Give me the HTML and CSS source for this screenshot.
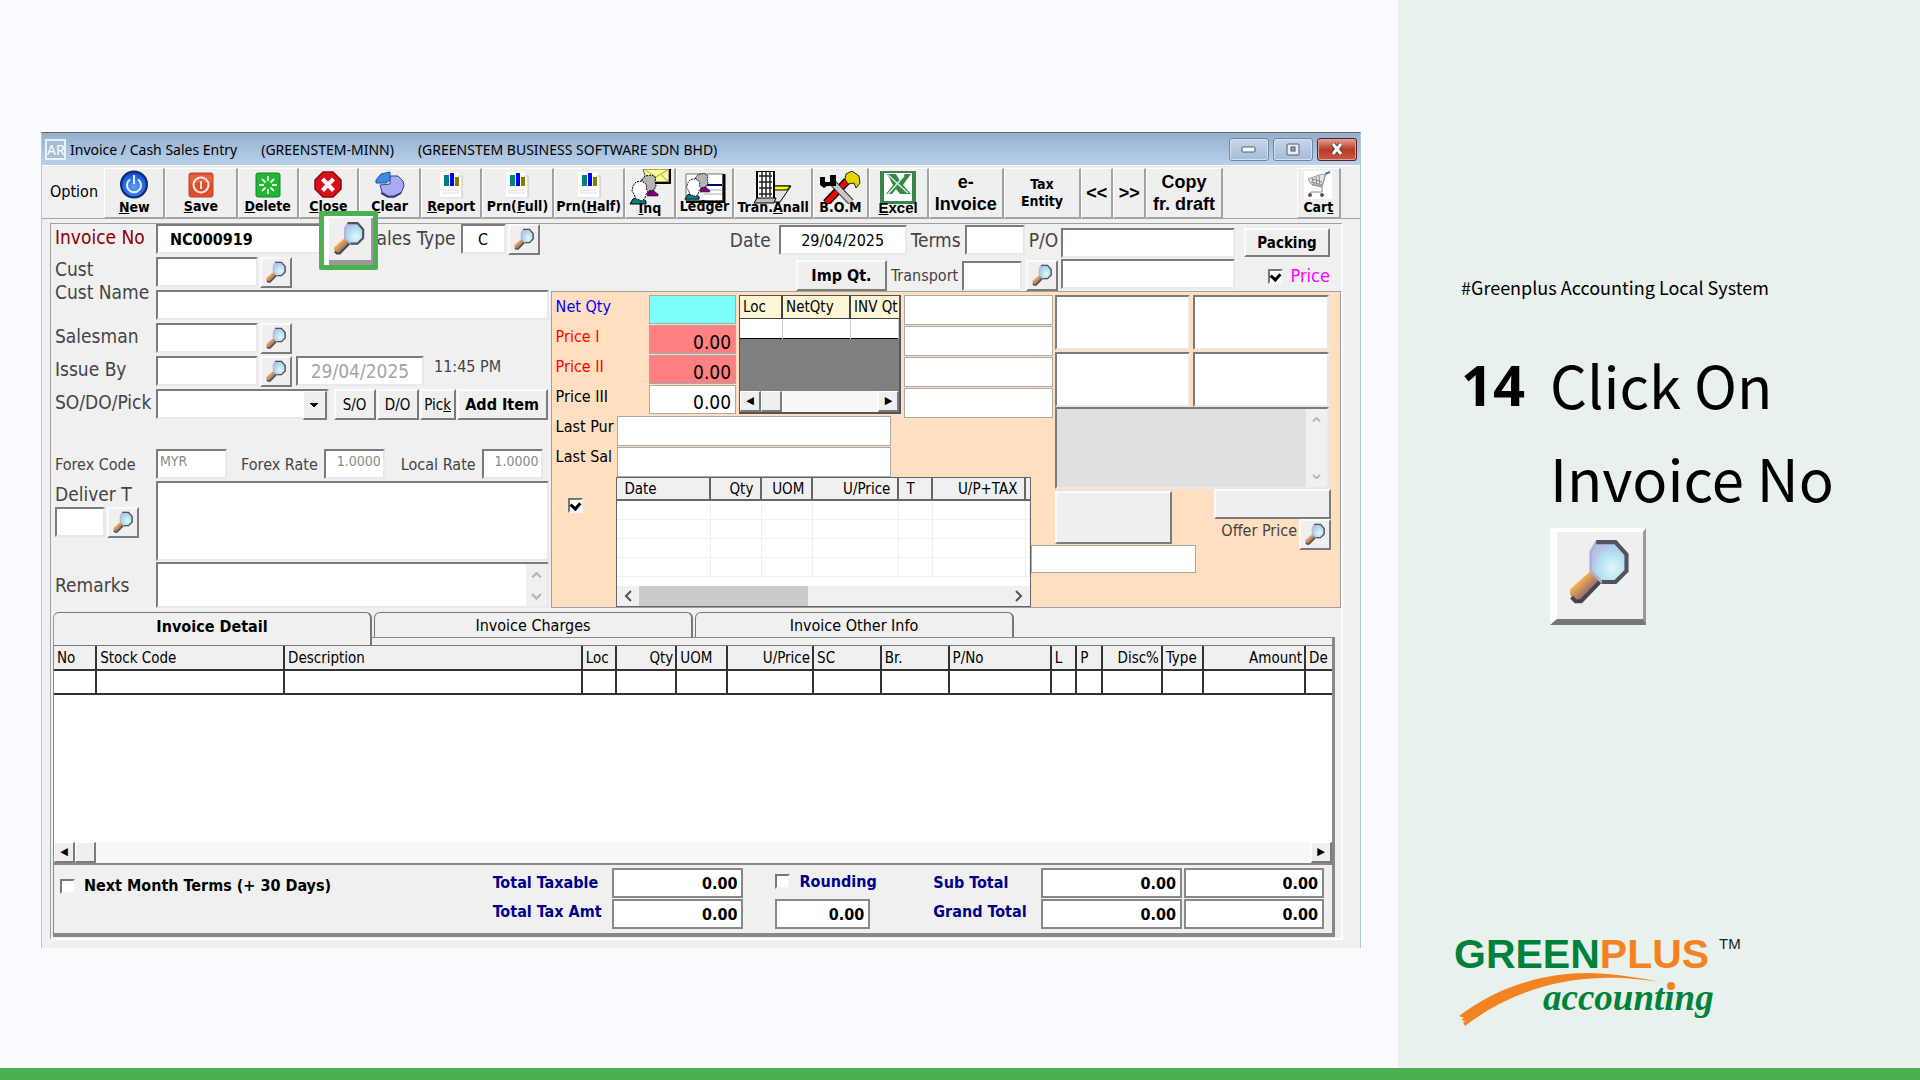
FILE: index.html
```html
<!DOCTYPE html>
<html lang="en">
<head>
    <meta charset="UTF-8">
    <meta name="viewport" content="width=device-width, initial-scale=1.0">
    <title>Greenplus Accounting - Invoice / Cash Sales Entry</title>
    <link rel="stylesheet" href="styles.css">
</head>
<body>
    <!-- Shared icons -->
    <svg class="icon-defs" width="0" height="0" aria-hidden="true">
        <defs>
            <linearGradient id="handle" x1="0" y1="0" x2="1" y2="1">
                <stop offset="0.3" stop-color="#ffb545"/>
                <stop offset="0.6" stop-color="#a77a70"/>
                <stop offset="0.8" stop-color="#3c3c44"/>
            </linearGradient>
            <radialGradient id="glass" cx="0.6" cy="0.65" r="0.6">
                <stop offset="0" stop-color="#e2f8f8"/>
                <stop offset="0.6" stop-color="#b4e2f2"/>
                <stop offset="1" stop-color="#b5c2e6"/>
            </radialGradient>
            <radialGradient id="blueBall" cx="0.5" cy="0.6" r="0.6">
                <stop offset="0" stop-color="#5fa0ff"/>
                <stop offset="0.7" stop-color="#2563e0"/>
                <stop offset="1" stop-color="#0b3a9c"/>
            </radialGradient>
        </defs>
        <symbol id="find" viewBox="0 0 24 24">
            <path d="M9 12 12.500 15.500 6 22.500 3 22.500 1.500 20.500 1.500 18.500z" fill="url(#handle)"/>
            <path d="M2 21.500 3.500 23 5.500 23 12.500 15.800" fill="none" stroke="#44444c" stroke-width="1.400"/>
            <path d="M11 1.500h7l4 4.500v6l-4 4h-5l-4-4V5z" fill="url(#glass)" stroke="#a9b4dc" stroke-width="1"/>
            <path d="M11 1.500h7l4 4.500v6l-4 4h-5" fill="none" stroke="#50525e" stroke-width="1.500"/>
        </symbol>
        <symbol id="chart" viewBox="0 0 24 26">
            <path d="M1 0h18l4 4v22H1z" fill="#fff"/>
            <path d="M19 4h4v22H1" fill="none" stroke="#c4c4c4"/>
            <path d="M5 3h5v11H5z" fill="#008080"/>
            <path d="M11 1h4v13h-4z" fill="#00f"/>
            <path d="M16 5h4v9h-4z" fill="#808000"/>
            <path d="M3 18h17M3 21h17" stroke="#dedede"/>
        </symbol>
        <symbol id="people" viewBox="0 0 36 32">
            <path d="M19 19l5-2 2 3 3 2v2H18z" fill="#800080" stroke="#000" stroke-width=".5"/>
            <path d="M13 8l3-4 7-1 4 3-1 3 1 5-2 4-5 1-2 3-5-3z" fill="#b4b4b4" stroke="#000" stroke-dasharray="2 1"/>
            <path d="M1 32l3-5 5-2 8 4v3z" fill="#008080" stroke="#000"/>
            <path d="M4 14l3-4 6-1 5 4-1 3 2 4-2 2-1 4-3 3-2-1-4-1-2-5-2-3z" fill="#fff" stroke="#000" stroke-dasharray="2 1"/>
        </symbol>
    </svg>

    <div class="page">
        <main class="stage">
            <section class="window">
                <header class="titlebar">
                    <span class="app-icon">AR</span>
                    <h1 class="title"><span>Invoice / Cash Sales Entry</span><span>(GREENSTEM-MINN)</span><span>(GREENSTEM BUSINESS SOFTWARE SDN BHD)</span></h1>
                    <div class="window-buttons">
                        <button type="button" aria-label="Minimize"><svg width="16" height="10" viewBox="0 0 16 10"><rect x="1" y="3" width="13" height="5" rx="1" fill="#fff" stroke="#525a68"/></svg></button>
                        <button type="button" aria-label="Maximize"><svg width="14" height="13" viewBox="0 0 14 13"><rect x="1" y="1" width="12" height="11" rx="1" fill="#e8edf5" stroke="#525a68"/><rect x="5" y="4" width="4" height="4" fill="#8fa7c5" stroke="#525a68"/></svg></button>
                        <button type="button" class="close" aria-label="Close window"><svg width="16" height="14" viewBox="0 0 16 14"><path d="M4 2l8 10M12 2L4 12" stroke="#50383c" stroke-width="5"/><path d="M4 2l8 10M12 2L4 12" stroke="#fff" stroke-width="3"/></svg></button>
                    </div>
                </header>

                <nav class="toolbar">
                    <span class="option">Option</span>
                    <button type="button">
                        <svg width="30" height="29" viewBox="0 0 30 29"><circle cx="15" cy="14.500" r="13" fill="url(#blueBall)" stroke="#092a6e" stroke-width="2"/><path d="M11 9.500a7 7 0 1 0 8 0M15 5v9" fill="none" stroke="#e4efff" stroke-width="2"/></svg>
                        <span><u>N</u>ew</span>
                    </button>
                    <button type="button">
                        <svg width="26" height="26" viewBox="0 0 26 26"><rect x="1" y="1" width="24" height="24" rx="2" fill="#de4d2b" stroke="#b34a31"/><path d="M2 3h22v8H2z" fill="#ef7351" opacity=".5"/><circle cx="13" cy="13" r="7.500" fill="none" stroke="#ffe9e0" stroke-width="2"/><path d="M13 9v8" stroke="#ffe9e0" stroke-width="2"/></svg>
                        <span><u>S</u>ave</span>
                    </button>
                    <button type="button">
                        <svg width="26" height="26" viewBox="0 0 26 26"><rect x="1" y="1" width="24" height="24" rx="2" fill="#22b533" stroke="#0d8a1c"/><path d="M13 4v5M13 17v5M4 13h5M17 13h5M7 7l3.500 3.500M15.500 15.500 19 19M19 7l-3.500 3.500M10.500 15.500 7 19" stroke="#e2ffe2" stroke-width="1.800"/></svg>
                        <span><u>D</u>elete</span>
                    </button>
                    <button type="button">
                        <svg width="28" height="27" viewBox="0 0 28 27"><path d="M9 1h10l8 8v9l-8 8H9l-8-8V9z" fill="#d8101d" stroke="#8b0a12" stroke-width="1.500"/><path d="M8.500 8l11 11.500M19.500 8l-11 11.500" stroke="#fff" stroke-width="4"/></svg>
                        <span><u>C</u>lose</span>
                    </button>
                    <button type="button">
                        <svg width="30" height="27" viewBox="0 0 30 27"><path d="M15 13V5h8l5 5 1 5-3 7-7 3h-6l-6-4-2-7z" fill="#a9aaf2" stroke="#3d3f80"/><path d="M1 9l5-6 9-2v8l-4 3H1z" fill="#3e8ae6" stroke="#1c4f9c"/><path d="M6 22l7 4h6l7-4" fill="none" stroke="#2b2b5e" stroke-width="1.500"/></svg>
                        <span><u>C</u>lear</span>
                    </button>
                    <button type="button"><svg width="24" height="26"><use href="#chart"/></svg><span><u>R</u>eport</span></button>
                    <button type="button"><svg width="24" height="26"><use href="#chart"/></svg><span>Prn(<u>F</u>ull)</span></button>
                    <button type="button"><svg width="24" height="26"><use href="#chart"/></svg><span>Prn(<u>H</u>alf)</span></button>
                    <button type="button" class="tall-icon">
                        <svg width="42" height="36" viewBox="0 0 42 36"><path d="M14 0h26v13H18z" fill="#ff8" stroke="#555"/><path d="M15 0l12 8L40 0M20 12l6-5M39 12l-7-6" fill="none" stroke="#999"/><path d="M41 0v14H24" fill="none" stroke="#000" stroke-width="2"/><use href="#people" width="36" height="34" y="2"/></svg>
                        <span><u>I</u>nq</span>
                    </button>
                    <button type="button" class="tall-icon">
                        <svg width="42" height="32" viewBox="0 0 42 32"><path d="M2 3h37v27H2z" fill="#fff" stroke="#777"/><path d="M40 3v28H2" fill="none" stroke="#000" stroke-width="3"/><path d="M18 14h20" stroke="#000080" stroke-width="2"/><path d="M18 19h20M20 23h18" stroke="#aaa"/><use href="#people" width="32" height="30" y="-1"/></svg>
                        <span>Ledger</span>
                    </button>
                    <button type="button" class="tall-icon">
                        <svg width="42" height="33" viewBox="0 0 42 33"><path d="M19 15h20L28 31H18z" fill="#e6e6e6" stroke="#000"/><path d="M20 15h18l-3 4H20z" fill="#ff0" stroke="#000"/><path d="M5 0h17v28H5z" fill="#fff" stroke="#000" stroke-width="2"/><path d="M10 0v26M14 0v26M18 0v26M7 5h13M7 11h13M7 17h13M7 23h13" stroke="#222" stroke-width="1.500"/><path d="M5 27h19l-2 5H2z" fill="#bbb" stroke="#000"/></svg>
                        <span>Tran.<u>A</u>nall</span>
                    </button>
                    <button type="button" class="tall-icon">
                        <svg width="42" height="33" viewBox="0 0 42 33"><path d="M28 10 7 32" stroke="#000" stroke-width="8"/><path d="M28 10 7 32" stroke="#f00" stroke-width="5"/><path d="M12 10 32 31" stroke="#333" stroke-width="7"/><path d="M12 10 32 31" stroke="#c8c8c8" stroke-width="5"/><path d="M1 6h5v5h5V4h6v11H8l-3 2-4-3z" fill="#000"/><path d="M27 3l6-3 7 5 1 7-4 5-2-5-6 1-3-5z" fill="#e5d600" stroke="#222"/></svg>
                        <span>B.O.M</span>
                    </button>
                    <button type="button" class="tall-icon excel">
                        <svg width="36" height="33" viewBox="0 0 36 33"><path d="M2 0h32v32H2z" fill="#fff" stroke="#398549" stroke-width="4"/><path d="M7 3h9l4 7 5-7h6l-8 11 8 9H20l-4-5-4 5H6l7-9z" fill="#35874a"/><path d="M8 4l20 18M24 5 8 23" stroke="#d8eedc" stroke-width="1.500"/></svg>
                        <span><u>E</u>xcel</span>
                    </button>
                    <button type="button" class="big">e-<br>Invoice</button>
                    <button type="button">Tax<br>Entity</button>
                    <button type="button" class="big">&lt;&lt;</button>
                    <button type="button" class="big">&gt;&gt;</button>
                    <button type="button" class="big">Copy<br>fr. draft</button>
                    <span></span>
                    <button type="button">
                        <svg width="28" height="28" viewBox="0 0 28 28"><path d="M0 0h28v28H0z" fill="#fff"/><path d="M26 1l-4 1-4 14-10-2M4 8l14-5 3 1-3 12-11-3z" fill="#e5e5e5" stroke="#999"/><path d="M26 1l-5 2" stroke="#4a78c8" stroke-width="2"/><path d="M8 8l10 3M7 11l11 3M8 7l2 7M12 6l1 9M15 5l1 10M18 16v5H7l-2 2" fill="none" stroke="#888"/><circle cx="6" cy="24" r="2" fill="#555"/><circle cx="18" cy="24" r="2" fill="#555"/></svg>
                        <span>Car<u>t</u></span>
                    </button>
                </nav>

                <form class="entry">
                    <div class="entry-top">
                        <!-- Customer side -->
                        <div class="customer">
                            <div class="row">
                                <label class="name maroon" for="invoice-no">Invoice No</label>
                                <input class="invoice-no" id="invoice-no" type="text" value="NC000919">
                                <label class="sales-label" for="sales-type">Sales Type</label>
                                <input class="sales-type" id="sales-type" type="text" value="C">
                                <button type="button" class="find" aria-label="Find sales type"><svg><use href="#find"/></svg></button>
                                <button type="button" class="find highlight" aria-label="Find invoice no"><svg><use href="#find"/></svg></button>
                            </div>
                            <div class="row double">
                                <div class="name-stack">
                                    <label for="cust">Cust</label>
                                    <label for="cust-name">Cust Name</label>
                                </div>
                                <div class="field-stack">
                                    <div class="inline">
                                        <input class="code" id="cust" type="text">
                                        <button type="button" class="find" aria-label="Find customer"><svg><use href="#find"/></svg></button>
                                    </div>
                                    <input id="cust-name" type="text">
                                </div>
                            </div>
                            <div class="row">
                                <label class="name" for="salesman">Salesman</label>
                                <input class="code" id="salesman" type="text">
                                <button type="button" class="find" aria-label="Find salesman"><svg><use href="#find"/></svg></button>
                            </div>
                            <div class="row">
                                <label class="name" for="issue-by">Issue By</label>
                                <input class="code" id="issue-by" type="text">
                                <button type="button" class="find" aria-label="Find issuer"><svg><use href="#find"/></svg></button>
                                <input class="issue-date" type="text" value="29/04/2025" aria-label="Issue date" disabled>
                                <span class="time">11:45 PM</span>
                            </div>
                            <div class="row gap-after">
                                <label class="name" for="pick">SO/DO/Pick</label>
                                <div class="combo"><select id="pick"><option></option></select></div>
                                <div class="pick-buttons">
                                    <button type="button">S/O</button>
                                    <button type="button">D/O</button>
                                    <button type="button">Pic<u>k</u></button>
                                    <button type="button" class="strong">Add Item</button>
                                </div>
                            </div>
                            <div class="row forex">
                                <label class="name" for="forex-code">Forex Code</label>
                                <input class="forex-code" id="forex-code" type="text" value="MYR" disabled>
                                <label for="forex-rate">Forex Rate</label>
                                <input class="rate" id="forex-rate" type="text" value="1.0000" disabled>
                                <label for="local-rate">Local Rate</label>
                                <input class="rate" id="local-rate" type="text" value="1.0000" disabled>
                            </div>
                            <div class="row deliver">
                                <div class="deliver-name">
                                    <label for="deliver-code">Deliver T</label>
                                    <div class="inline">
                                        <input id="deliver-code" type="text">
                                        <button type="button" class="find" aria-label="Find address"><svg><use href="#find"/></svg></button>
                                    </div>
                                </div>
                                <textarea aria-label="Delivery address"></textarea>
                            </div>
                            <div class="row remarks">
                                <label class="name" for="remarks">Remarks</label>
                                <div class="memo">
                                    <textarea id="remarks"></textarea>
                                    <div class="vscroll"><svg viewBox="0 0 10 6"><path d="M1 5l4-4 4 4"/></svg><svg viewBox="0 0 10 6"><path d="M1 1l4 4 4-4"/></svg></div>
                                </div>
                            </div>
                        </div>

                        <!-- Document and price side -->
                        <div class="document">
                            <div class="doc-head">
                                <div class="doc-fields">
                                    <div class="doc-row">
                                        <label for="date">Date</label>
                                        <input class="date" id="date" type="text" value="29/04/2025">
                                        <label for="terms">Terms</label>
                                        <input class="short" id="terms" type="text">
                                        <label for="po">P/O</label>
                                    </div>
                                    <div class="doc-row">
                                        <button type="button" class="imp">Imp Qt.</button>
                                        <label class="small" for="transport">Transport</label>
                                        <input class="short" id="transport" type="text">
                                        <button type="button" class="find" aria-label="Find transport"><svg><use href="#find"/></svg></button>
                                    </div>
                                </div>
                                <div class="po">
                                    <input id="po" type="text">
                                    <input type="text" aria-label="P/O line 2">
                                </div>
                                <div class="doc-actions">
                                    <button type="button">Packing</button>
                                    <label class="price-check"><input type="checkbox" checked> Price</label>
                                </div>
                            </div>

                            <div class="prices">
                                <div class="price-labels">
                                    <label class="blue" for="net-qty">Net Qty</label>
                                    <label class="red" for="price-1">Price I</label>
                                    <label class="red" for="price-2">Price II</label>
                                    <label for="price-3">Price III</label>
                                    <label for="last-pur">Last Pur</label>
                                    <label for="last-sal">Last Sal</label>
                                    <input type="checkbox" aria-label="Show price history" checked>
                                </div>
                                <div class="price-main">
                                    <div class="price-top">
                                        <div class="price-values">
                                            <input class="cyan" id="net-qty" type="text">
                                            <input class="salmon" id="price-1" type="text" value="0.00">
                                            <input class="salmon" id="price-2" type="text" value="0.00">
                                            <input id="price-3" type="text" value="0.00">
                                        </div>
                                        <div class="stock">
                                            <table>
                                                <tr><th>Loc</th><th>NetQty</th><th>INV Qt</th></tr>
                                                <tr><td></td><td></td><td></td></tr>
                                            </table>
                                            <div class="hscroll">
                                                <button type="button" aria-label="Scroll left">◀</button>
                                                <span class="thumb"></span>
                                                <button type="button" class="right" aria-label="Scroll right">▶</button>
                                            </div>
                                        </div>
                                        <div class="extra">
                                            <input type="text" aria-label="Extra 1">
                                            <input type="text" aria-label="Extra 2">
                                            <input type="text" aria-label="Extra 3">
                                            <input type="text" aria-label="Extra 4">
                                        </div>
                                    </div>
                                    <div class="last">
                                        <input id="last-pur" type="text">
                                        <input id="last-sal" type="text">
                                    </div>
                                    <div class="history">
                                        <table>
                                            <colgroup><col class="h-date"><col class="h-qty"><col class="h-qty"><col class="h-price"><col class="h-t"><col class="h-tax"><col></colgroup>
                                            <tr><th>Date</th><th class="num">Qty</th><th class="num">UOM</th><th class="num">U/Price</th><th>T</th><th class="num">U/P+TAX</th><th></th></tr>
                                            <tr><td></td><td></td><td></td><td></td><td></td><td></td><td></td></tr>
                                            <tr><td></td><td></td><td></td><td></td><td></td><td></td><td></td></tr>
                                            <tr><td></td><td></td><td></td><td></td><td></td><td></td><td></td></tr>
                                            <tr><td></td><td></td><td></td><td></td><td></td><td></td><td></td></tr>
                                        </table>
                                        <div class="flat-scroll">
                                            <svg viewBox="0 0 8 12"><path d="M7 1L2 6l5 5"/></svg>
                                            <span></span>
                                            <svg viewBox="0 0 8 12"><path d="M1 1l5 5-5 5"/></svg>
                                        </div>
                                    </div>
                                </div>
                                <div class="price-side">
                                    <div class="boxes">
                                        <input type="text" aria-label="Box 1">
                                        <input type="text" aria-label="Box 2">
                                        <input type="text" aria-label="Box 3">
                                        <input type="text" aria-label="Box 4">
                                    </div>
                                    <div class="memo grey">
                                        <textarea aria-label="Item notes"></textarea>
                                        <div class="vscroll"><svg viewBox="0 0 10 6"><path d="M1 5l4-4 4 4"/></svg><svg viewBox="0 0 10 6"><path d="M1 1l4 4 4-4"/></svg></div>
                                    </div>
                                    <div class="offer">
                                        <button type="button" class="blank tall" aria-label="Item picture"></button>
                                        <div class="offer-right">
                                            <button type="button" class="blank" aria-label="Item action"></button>
                                            <div class="offer-price">
                                                <span>Offer Price</span>
                                                <button type="button" class="find" aria-label="Find offer price"><svg><use href="#find"/></svg></button>
                                            </div>
                                        </div>
                                    </div>
                                    <input class="offer-input" type="text" aria-label="Offer">
                                </div>
                            </div>
                        </div>
                    </div>

                    <div class="tabs">
                        <button type="button" class="active">Invoice Detail</button>
                        <button type="button">Invoice Charges</button>
                        <button type="button">Invoice Other Info</button>
                    </div>

                    <div class="detail">
                        <div class="grid-box">
                            <table class="items">
                                <colgroup>
                                    <col class="c-no"><col class="c-code"><col class="c-desc"><col class="c-loc"><col class="c-qty"><col class="c-uom"><col class="c-price"><col class="c-sc"><col class="c-sc"><col class="c-pno"><col class="c-flag"><col class="c-flag"><col class="c-qty"><col class="c-type"><col class="c-pno"><col>
                                </colgroup>
                                <tr>
                                    <th>No</th><th>Stock Code</th><th>Description</th><th>Loc</th><th class="num">Qty</th><th>UOM</th><th class="num">U/Price</th><th>SC</th><th>Br.</th><th>P/No</th><th>L</th><th>P</th><th class="num">Disc%</th><th>Type</th><th class="num">Amount</th><th>De</th>
                                </tr>
                                <tr><td></td><td></td><td></td><td></td><td></td><td></td><td></td><td></td><td></td><td></td><td></td><td></td><td></td><td></td><td></td><td></td></tr>
                            </table>
                            <div class="hscroll">
                                <button type="button" aria-label="Scroll left">◀</button>
                                <span class="thumb"></span>
                                <button type="button" class="right" aria-label="Scroll right">▶</button>
                            </div>
                        </div>

                        <div class="totals">
                            <label class="next-month"><input type="checkbox"> Next Month Terms (+ 30 Days)</label>
                            <div class="labels">
                                <label for="taxable">Total Taxable</label>
                                <label for="tax-amt">Total Tax Amt</label>
                            </div>
                            <div class="values">
                                <input id="taxable" type="text" value="0.00">
                                <input id="tax-amt" type="text" value="0.00">
                            </div>
                            <div class="values rounding">
                                <label><input type="checkbox"> Rounding</label>
                                <input type="text" value="0.00" aria-label="Rounding amount">
                            </div>
                            <div class="labels">
                                <label for="sub-total">Sub Total</label>
                                <label for="grand-total">Grand Total</label>
                            </div>
                            <div class="values">
                                <input id="sub-total" type="text" value="0.00">
                                <input id="grand-total" type="text" value="0.00">
                            </div>
                            <div class="values">
                                <input type="text" value="0.00" aria-label="Sub total local">
                                <input type="text" value="0.00" aria-label="Grand total local">
                            </div>
                        </div>
                    </div>
                </form>
            </section>
        </main>

        <aside class="side">
            <p class="tag">#Greenplus Accounting Local System</p>
            <div class="step">
                <span class="step-number">14</span>
                <div>
                    <h2>Click On Invoice No</h2>
                    <div class="find-large"><svg><use href="#find"/></svg></div>
                </div>
            </div>
            <svg class="logo" width="300" height="112" viewBox="0 -12 300 112" role="img" aria-label="Greenplus accounting">
                <text class="logo-main" x="0" y="35"><tspan fill="#00823d">GREEN</tspan><tspan fill="#f58220">PLUS</tspan></text>
                <text class="logo-tm" x="265" y="16">TM</text>
                <path d="M5 83C45 53 90 40 135 40c30 1 52 5 71 9-22-3-40-5-58-4C98 46 50 63 11 93l-2-4 3-1-5-1 3-2z" fill="#f58220"/>
                <text class="logo-sub" x="89" y="77">accounting</text>
                <circle cx="217" cy="53" r="4" fill="#f58220"/>
            </svg>
        </aside>
    </div>
    <footer class="bar"></footer>
</body>
</html>
```
FILE: styles.css
```css
* {
    box-sizing: border-box;
}

body {
    margin: 0;
    min-height: 100vh;
    display: flex;
    flex-direction: column;
    background-color: #fafbff;
    font-family: "DejaVu Sans Condensed", "DejaVu Sans", sans-serif;
    font-size: 16px;
    color: #000;
}

.icon-defs {
    position: absolute;
}

.page {
    flex: 1;
    display: grid;
    grid-template-columns: 1398fr 522fr;
}

.stage {
    padding: 132px 37px 0 41px;
    min-width: 0;
}

.bar {
    height: 12px;
    background-color: #4caf50;
}

/* Window */
.window {
    background-color: #f0f0f0;
    border: 1px solid #a9cbe3;
    border-top: 1px solid #5c6b7c;
    border-bottom: none;
    padding-bottom: 8px;
}

.titlebar {
    display: flex;
    align-items: center;
    height: 32px;
    padding: 0 3px;
    background: linear-gradient(#94b0ce, #b9d1ea);
}

.app-icon {
    border: 2px solid #e8f0f8;
    color: #fff;
    font-family: "Noto Sans", sans-serif;
    font-size: 14px;
    line-height: 17px;
    width: 21px;
    text-align: center;
    background-color: #a5bdd6;
}

.title {
    flex: 1;
    display: flex;
    gap: 24px;
    margin: 0 4px;
    font-family: "Noto Sans", sans-serif;
    font-size: 14px;
    font-weight: normal;
    white-space: nowrap;
}

.window-buttons {
    display: flex;
    gap: 4px;
}

.window-buttons button {
    width: 40px;
    height: 23px;
    padding: 0;
    display: flex;
    align-items: center;
    justify-content: center;
    border: 1px solid #6f86a3;
    border-radius: 3px;
    background: linear-gradient(#c6d7ea, #a4bcd8);
    box-shadow: inset 0 0 0 1px #d5e2f0;
}

.window-buttons .close {
    border-color: #5c1d20;
    background: linear-gradient(#e0a496, #b83a28 50%, #c65a45);
    box-shadow: inset 0 0 0 1px #dfa195;
}

/* Toolbar */
.toolbar {
    display: grid;
    grid-template-columns: 61fr 61fr 72fr 61fr 60fr 62fr 61fr 71fr 71fr 51fr 58fr 79fr 55fr 60fr 75fr 77fr 32fr 33fr 76fr 74fr 44fr 19fr;
    height: 54px;
    border-top: 1px solid #fff;
    border-bottom: 1px solid #a5a5a5;
    padding: 2px 0 2px 1px;
    overflow: hidden;
}

.toolbar .option {
    padding-left: 7px;
    line-height: 48px;
}

.toolbar button {
    display: flex;
    flex-direction: column;
    align-items: center;
    justify-content: center;
    min-width: 0;
    padding: 0;
    background-color: #efefef;
    border: 1px solid #fff;
    border-right: 2px solid #a2a2a2;
    border-bottom: 2px solid #a2a2a2;
    font-family: inherit;
    font-size: 14px;
    font-weight: bold;
    line-height: 17px;
    white-space: nowrap;
}

.toolbar button svg {
    flex: none;
}

.toolbar button svg + span {
    position: relative;
}

.toolbar .tall-icon svg {
    margin-bottom: -5px;
}

.toolbar .big {
    font-family: "Liberation Sans", Arial, sans-serif;
    font-size: 18px;
    line-height: 22px;
}

.toolbar .excel {
    font-family: "Liberation Sans", Arial, sans-serif;
    font-size: 15px;
}

/* Controls */
input[type="text"],
textarea,
select {
    min-width: 0;
    height: 30px;
    margin: 0;
    padding: 0 4px;
    background-color: #fff;
    border: 2px solid #e9e9e9;
    border-top-color: #7b7b7b;
    border-left-color: #7b7b7b;
    border-radius: 0;
    font-family: inherit;
    font-size: 16px;
    color: #000;
}

textarea {
    display: block;
    resize: none;
}

input:disabled {
    color: #8a8a8a;
}

input[type="checkbox"] {
    appearance: none;
    flex: none;
    width: 15px;
    height: 15px;
    margin: 0;
    background-color: #fff;
    border: 2px solid #f4f4f4;
    border-top-color: #777;
    border-left-color: #777;
    display: flex;
}

input[type="checkbox"]:checked::before {
    content: "";
    width: 9px;
    height: 5px;
    margin: 1px;
    border-left: 3px solid #000;
    border-bottom: 3px solid #000;
    transform: rotate(-48deg);
}

.entry button {
    padding: 0;
    background-color: #efefef;
    border: 2px solid #fbfbfb;
    border-right-color: #7b7b7b;
    border-bottom-color: #7b7b7b;
    font-family: inherit;
    font-size: 15px;
    color: #000;
    white-space: nowrap;
}

.entry .find {
    flex: none;
    width: 32px;
    height: 31px;
}

.find svg {
    display: block;
    width: 22px;
    height: 22px;
    margin: 0 3px 2px;
}

.inline {
    display: flex;
    gap: 2px;
}

/* Form */
.entry {
    margin: 4px 17px 0 8px;
    border: 1px solid #a0a0a0;
    border-right: 2px solid #fff;
    border-bottom: 2px solid #fff;
}

.entry-top {
    display: grid;
    grid-template-columns: 498fr 791fr;
    gap: 2px;
}

.customer {
    display: flex;
    flex-direction: column;
    min-width: 0;
    color: #444;
    font-size: 19px;
}

.row {
    position: relative;
    display: flex;
    align-items: flex-start;
    gap: 2px;
    height: 33px;
    padding-left: 4px;
}

.name,
.name-stack {
    flex: none;
    width: 99px;
    line-height: 26px;
    white-space: nowrap;
}

.maroon {
    color: #8b0000;
}

.invoice-no {
    flex: 1;
}

.row .invoice-no {
    padding-left: 12px;
    font-weight: bold;
}

.sales-label {
    flex: none;
    line-height: 28px;
    margin: 0 3px;
}

.sales-type {
    flex: none;
    width: 45px;
    text-align: center;
}

.row .sales-type + .find {
    margin-right: 9px;
}

.row .highlight {
    position: absolute;
    left: 268px;
    top: -13px;
    width: 59px;
    height: 59px;
    background-color: #efefef;
    border: 5px solid #4caf50;
    border-radius: 2px;
    box-shadow: inset 5px 2px 0 #fff, inset -2px -5px 0 #999;
}

.highlight svg {
    width: 34px;
    height: 34px;
    margin: 0 0 5px 8px;
}

.double {
    height: 66px;
}

.name-stack {
    display: flex;
    flex-direction: column;
    padding-top: 1px;
    line-height: 23px;
}

.field-stack {
    flex: 1;
    display: flex;
    flex-direction: column;
    gap: 2px;
}

.code {
    flex: none;
    width: 102px;
}

.row .issue-date {
    width: 128px;
    margin-left: 2px;
    font-size: 19px;
    text-align: center;
    color: #a5a5a5;
}

.time {
    margin-left: 8px;
    font-size: 16px;
    line-height: 22px;
}

.gap-after {
    margin-bottom: 27px;
}

.combo {
    position: relative;
    flex: 1;
}

.combo select {
    appearance: none;
    width: 100%;
}

.combo::after {
    content: "";
    position: absolute;
    right: 2px;
    top: 2px;
    width: 21px;
    height: 26px;
    border: 1px solid #fff;
    border-right: 2px solid #7b7b7b;
    border-bottom: 2px solid #7b7b7b;
    background: linear-gradient(45deg, transparent 50%, #000 50%) 5px 11px / 5px 5px no-repeat, linear-gradient(-45deg, transparent 50%, #000 50%) 10px 11px / 5px 5px no-repeat, #efefef;
    pointer-events: none;
}

.pick-buttons {
    display: grid;
    grid-template-columns: 42px 42px 36px 91px;
    gap: 1px;
    height: 31px;
    margin: 0 1px 0 3px;
}

.entry .strong {
    font-weight: bold;
    font-size: 16px;
}

.forex {
    height: 32px;
    font-size: 16px;
}

.forex label {
    line-height: 32px;
}

.forex label:not(.name) {
    flex: 1;
    text-align: right;
    padding-right: 4px;
    white-space: nowrap;
}

.forex input[type="text"] {
    padding: 0 2px 6px;
    font-size: 14px;
}

.row .forex-code {
    width: 71px;
}

.row .rate {
    width: 61px;
    text-align: right;
}

.forex .rate:last-child {
    margin-right: 6px;
}

.deliver {
    height: 81px;
}

.deliver-name {
    flex: none;
    width: 99px;
    line-height: 26px;
}

.deliver-name .inline input {
    width: 50px;
}

.deliver textarea {
    flex: 1;
    height: 80px;
}

.remarks {
    height: 46px;
}

.remarks .name {
    line-height: 46px;
}

.memo {
    flex: 1;
    display: flex;
    height: 46px;
    border: 2px solid #e9e9e9;
    border-top-color: #7b7b7b;
    border-left-color: #7b7b7b;
    background-color: #fff;
}

.memo textarea {
    flex: 1;
    height: auto;
    border: none;
    background: none;
}

.vscroll {
    display: flex;
    flex-direction: column;
    justify-content: space-between;
    width: 21px;
    padding: 8px 5px 6px;
    background-color: #f0f0f0;
}

.vscroll path,
.flat-scroll path {
    fill: none;
    stroke: #b5b5b5;
    stroke-width: 2;
}

/* Document header */
.document {
    display: flex;
    flex-direction: column;
    min-width: 0;
}

.doc-head {
    display: grid;
    grid-template-columns: 510fr 174fr 94fr 10fr;
    gap: 1px;
    height: 67px;
    color: #444;
    font-size: 19px;
}

.doc-fields {
    display: flex;
    flex-direction: column;
    justify-content: space-between;
    padding: 1px 2px 0 0;
}

.doc-row {
    display: flex;
    align-items: center;
    justify-content: flex-end;
    gap: 4px;
    white-space: nowrap;
}

.doc-row .date {
    width: 128px;
    margin-left: 4px;
    text-align: center;
}

.doc-row .short {
    width: 60px;
}

.doc-row .small {
    font-size: 16px;
}

.entry .imp {
    width: 91px;
    height: 31px;
    font-size: 16px;
    font-weight: bold;
}

.po {
    display: flex;
    flex-direction: column;
    gap: 1px;
    min-width: 0;
    padding-top: 4px;
}

.doc-actions {
    display: flex;
    flex-direction: column;
    align-items: flex-end;
    gap: 8px;
    padding: 4px 0 0 8px;
}

.doc-actions button {
    width: 100%;
    height: 29px;
    font-weight: bold;
}

.price-check {
    display: flex;
    align-items: center;
    gap: 8px;
    color: #f0f;
    font-size: 18px;
    line-height: 22px;
}

/* Price panel */
.prices {
    flex: 1;
    display: grid;
    grid-template-columns: 63fr 438fr 286fr;
    gap: 2px;
    background-color: #ffdfbf;
    border: 1px solid #a0a0a0;
}

.price-labels {
    display: flex;
    flex-direction: column;
    min-width: 0;
    padding-left: 4px;
    font-size: 16px;
    line-height: 30px;
    white-space: nowrap;
}

.price-labels input {
    margin: 26px 0 0 12px;
}

.blue {
    color: #00f;
}

.red {
    color: #f00;
}

.price-main {
    display: flex;
    flex-direction: column;
    min-width: 0;
    padding-top: 3px;
}

.price-top {
    display: grid;
    grid-template-columns: 87fr 163fr 149fr;
    gap: 3px;
    height: 121px;
    padding-left: 33px;
}

.price-values,
.extra {
    display: flex;
    flex-direction: column;
    gap: 1px;
    min-width: 0;
}

.prices .price-values input,
.prices .extra input,
.prices .last input,
.prices .offer-input {
    border: 1px solid #a9a9a9;
}

.price-values input[type="text"] {
    height: 29px;
    padding: 4px 4px 0;
    font-size: 19px;
    text-align: right;
}

.price-values .cyan {
    background-color: #80ffff;
}

.price-values .salmon {
    background-color: #ff8080;
}

.stock {
    display: flex;
    flex-direction: column;
    justify-content: space-between;
    height: 119px;
    min-width: 0;
    background-color: #808080;
    border: 1px solid #555;
    border-right-width: 2px;
    border-bottom-width: 2px;
    overflow: hidden;
}

.stock table {
    width: 100%;
    table-layout: fixed;
    border-collapse: collapse;
    background-color: #fff;
    border-bottom: 1px solid #000;
}

.stock th {
    height: 22px;
    padding: 0 3px;
    font-size: 15px;
    font-weight: normal;
    text-align: left;
    white-space: nowrap;
    background-color: #fcf6d6;
    border-right: 2px solid #444;
    border-bottom: 1px solid #444;
}

.stock th:first-child {
    width: 42px;
}

.stock th:nth-child(2) {
    width: 68px;
}

.stock th:last-child {
    border-right: none;
    overflow: hidden;
}

.stock td {
    height: 20px;
    border-right: 1px solid #d0d0d0;
}

.hscroll {
    display: flex;
    height: 21px;
    background-color: #f8f8f8;
}

.hscroll button,
.hscroll .thumb {
    width: 21px;
    background-color: #efefef;
    border: 1px solid #fff;
    border-right: 2px solid #7b7b7b;
    border-bottom: 2px solid #7b7b7b;
}

.entry .hscroll button {
    font-size: 11px;
    line-height: 16px;
}

.hscroll .right {
    margin-left: auto;
}

.last {
    display: flex;
    flex-direction: column;
    width: 63%;
    gap: 1px;
    padding-left: 1px;
}

.history {
    flex: 1;
    display: flex;
    flex-direction: column;
    justify-content: space-between;
    width: 95%;
    background-color: #fff;
    border: 1px solid #666;
}

.history table {
    width: 100%;
    table-layout: fixed;
    border-collapse: collapse;
}

.h-date { width: 93px; }
.h-qty { width: 51px; }
.h-price { width: 86px; }
.h-t { width: 34px; }
.h-tax { width: 93px; }

.history th {
    height: 22px;
    padding: 0 7px;
    font-size: 15px;
    font-weight: normal;
    line-height: 18px;
    text-align: left;
    background-color: #f0f0f0;
    border-right: 2px solid #666;
    border-bottom: 2px solid #666;
}

.history th:last-child {
    border-right: none;
}

.history .num,
.items .num {
    text-align: right;
    padding-left: 0;
}

.history td {
    height: 19px;
    border: 1px solid #efefef;
    border-left: none;
}

.flat-scroll {
    display: flex;
    align-items: center;
    gap: 7px;
    height: 20px;
    padding: 0 7px;
    background-color: #f0f0f0;
}

.flat-scroll svg {
    width: 8px;
    height: 12px;
}

.flat-scroll path {
    stroke: #555;
}

.flat-scroll span {
    width: 169px;
    height: 20px;
    margin-right: auto;
    background-color: #cbcbcb;
}

.price-side {
    display: flex;
    flex-direction: column;
    min-width: 0;
    padding: 3px 11px 0 0;
}

.boxes {
    display: grid;
    grid-template-columns: 1fr 1fr;
    gap: 2px 3px;
}

.boxes input[type="text"] {
    height: 55px;
}

.price-side .grey {
    flex: none;
    height: 82px;
    background-color: #e0e0e0;
}

.price-side .vscroll {
    padding: 8px 6px;
}

.offer {
    display: flex;
    justify-content: space-between;
    align-items: flex-start;
    margin-right: -2px;
}

.entry .blank {
    width: 117px;
    height: 30px;
}

.entry .tall {
    height: 53px;
    margin-top: 2px;
}

.offer-right {
    display: flex;
    flex-direction: column;
    align-items: flex-end;
}

.offer-price {
    display: flex;
    gap: 2px;
    color: #444;
    font-size: 16px;
    line-height: 24px;
    white-space: nowrap;
}

.prices .offer-input {
    width: 165px;
    height: 28px;
    margin: -5px 0 0 -24px;
}

/* Tabs */
.tabs {
    display: flex;
    gap: 2px;
    margin: 4px 0 0 2px;
}

.tabs button {
    flex: 0 0 319px;
    height: 25px;
    background-color: #f0f0f0;
    border: 1px solid #777;
    border-right: 2px solid #777;
    border-bottom: none;
    border-radius: 6px 6px 0 0;
    font-size: 16px;
}

.tabs .active {
    position: relative;
    height: 33px;
    margin-bottom: -8px;
    padding-bottom: 6px;
    font-weight: bold;
    border-left-color: #999;
}

.detail {
    margin: 0 6px 1px 2px;
    padding-top: 7px;
    border: 1px solid #888;
    border-right: 3px solid #888;
    border-bottom: 4px solid #888;
}

.grid-box {
    display: flex;
    flex-direction: column;
    justify-content: space-between;
    height: 220px;
    background-color: #fff;
    border-top: 1px solid #777;
    border-bottom: 2px solid #888;
}

.items {
    width: 100%;
    table-layout: fixed;
    border-collapse: collapse;
    border-bottom: 2px solid #333;
}

/* Item columns share the width in proportion */
.c-no { width: 3.3%; }
.c-code { width: 14.7%; }
.c-desc { width: 23.3%; }
.c-loc { width: 2.7%; }
.c-qty { width: 4.7%; }
.c-uom { width: 4%; }
.c-price { width: 6.7%; }
.c-sc { width: 5.3%; }
.c-pno { width: 8%; }
.c-flag { width: 2%; }
.c-type { width: 3.2%; }

.items th {
    height: 24px;
    padding: 0 2px 0 3px;
    font-size: 15px;
    font-weight: normal;
    text-align: left;
    white-space: nowrap;
    background-color: #f0f0f0;
    border-right: 2px solid #333;
    border-bottom: 2px solid #333;
}

.items th:last-child,
.items td:last-child {
    border-right: none;
}

.items td {
    height: 24px;
    border-right: 2px solid #333;
}

.totals {
    display: grid;
    grid-template-columns: 433fr 119fr 134fr 188fr 108fr 143fr 142fr;
    padding: 3px 6px 4px 6px;
    font-size: 16px;
    font-weight: bold;
}

.totals label {
    white-space: nowrap;
}

.next-month {
    display: flex;
    align-items: center;
    align-self: start;
    gap: 9px;
    min-width: 0;
    line-height: 36px;
}

.labels {
    display: flex;
    flex-direction: column;
    min-width: 0;
    color: #00008b;
    line-height: 29px;
}

.values {
    display: flex;
    flex-direction: column;
    gap: 1px;
    min-width: 0;
    margin-right: 2px;
}

.values input[type="text"] {
    width: 100%;
    border: 2px solid #888;
    padding: 0 4px;
    font-weight: bold;
    text-align: right;
}

.rounding {
    color: #00008b;
    margin: 0 63px 0 30px;
}

.rounding label {
    display: flex;
    align-items: center;
    gap: 9px;
    height: 30px;
    padding-bottom: 4px;
}

/* Side panel */
.side {
    display: flex;
    flex-direction: column;
    padding: 271px 56px 35px 63px;
    background-color: #e8f1ec;
    font-family: "Noto Sans CJK SC", "Open Sans", sans-serif;
}

.tag {
    margin: 0;
    font-size: 18px;
    line-height: 32px;
}

.step {
    display: flex;
    gap: 25px;
    margin-top: 35px;
}

.step-number {
    width: 64px;
    font-family: "Open Sans", sans-serif;
    font-size: 56px;
    font-weight: bold;
    line-height: 93px;
}

.step h2 {
    margin: 0;
    font-size: 58px;
    font-weight: normal;
    line-height: 93px;
}

.find-large {
    width: 96px;
    height: 97px;
    margin-top: 4px;
    background-color: #efefef;
    border: 3px solid #999;
    border-top: 4px solid #fff;
    border-left: 7px solid #fff;
    border-bottom: 6px solid #777;
}

.find-large svg {
    display: block;
    width: 66px;
    height: 66px;
    margin: 6px 0 0 9px;
}

.logo {
    margin-top: auto;
    margin-left: -7px;
}

.logo-main {
    font: bold 41px "Liberation Sans", Arial, sans-serif;
}

.logo-tm {
    font: 15px "Liberation Sans", Arial, sans-serif;
    fill: #222;
}

.logo-sub {
    font: italic bold 37px "Liberation Serif", serif;
    fill: #00823d;
}
```
